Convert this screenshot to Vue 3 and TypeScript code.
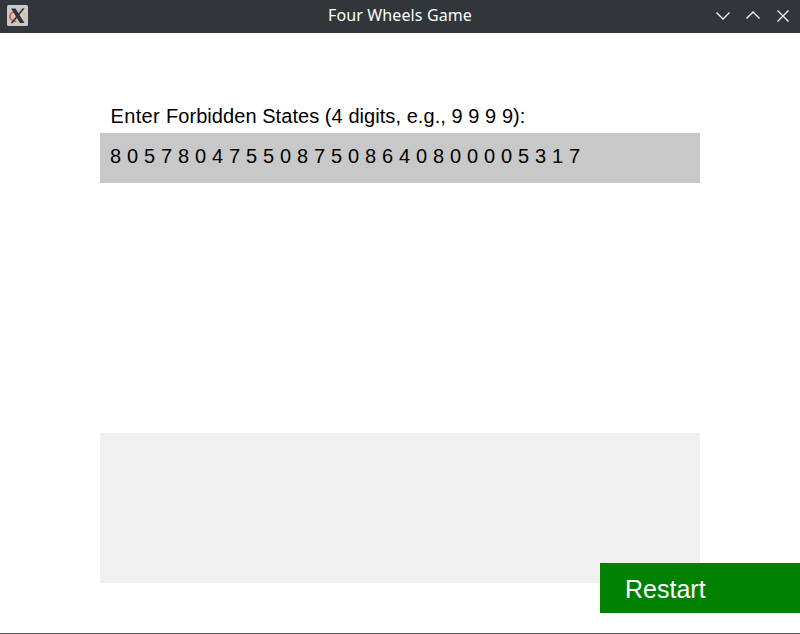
<script setup lang="ts">
import { ref } from 'vue'

const title = 'Four Wheels Game'
const initial = '8 0 5 7 8 0 4 7 5 5 0 8 7 5 0 8 6 4 0 8 0 0 0 0 5 3 1 7'
const states = ref<string>(initial)

function restart(): void {
  states.value = ''
}
</script>

<template>
  <div class="window">
    <header class="titlebar">
      <svg class="app-icon" width="21" height="21" viewBox="0 0 21 21">
        <rect width="21" height="21" rx="1.5" fill="#c6cacd" />
        <ellipse cx="10.7" cy="11.5" rx="8" ry="5" fill="none" stroke="#f3b56c" stroke-width="1.3" />
        <path d="M10 6.5C.6 6.5.6 16 9 16.5" fill="none" stroke="#ee5a24" stroke-width="1.7" />
        <path d="M4 3.5h4.5L17.5 18H13z" fill="#303438" />
        <path d="M15.5 3.5h1.7L5.7 18H4z" fill="#303438" stroke="#303438" stroke-width="0.4" />
      </svg>
      <h1 class="title">{{ title }}</h1>
      <div class="controls">
        <svg width="16" height="16" viewBox="0 0 16 16"><path d="M1.5 4.5L8 11l6.5-6.5" /></svg>
        <svg width="16" height="16" viewBox="0 0 16 16"><path d="M1.5 10.5L8 4l6.5 6.5" /></svg>
        <svg width="16" height="16" viewBox="0 0 16 16"><path d="M2.5 2.5l11 11M13.5 2.5l-11 11" /></svg>
      </div>
    </header>
    <main class="content">
      <p class="prompt"><span class="lead">Enter </span>Forbidden States (4 digits, e.g., 9 9 9 9):</p>
      <div class="entry">{{ states }}</div>
      <div class="output"></div>
      <button class="restart" type="button" @click="restart">Restart</button>
    </main>
  </div>
</template>

<style>
body {
  margin: 0;
  background: #fff;
}
</style>

<style scoped>
.window {
  display: flex;
  flex-direction: column;
  box-sizing: border-box;
  width: 800px;
  height: 634px;
  overflow: hidden;
  background: #fff;
  border-bottom: 1px solid #5b5e61;
  font-family: "Liberation Sans", Arial, sans-serif;
}

.titlebar {
  display: grid;
  grid-template-columns: 100px 1fr 100px;
  align-items: center;
  flex: none;
  height: 33px;
  background: #31363b;
}

.app-icon {
  margin: -2px 0 0 7px;
}

.title {
  margin: -3px 0 0;
  color: #fcfcfc;
  font: 400 16px/22px "Noto Sans", sans-serif;
  letter-spacing: 0.12px;
  text-align: center;
}

.controls {
  display: flex;
  justify-content: flex-end;
  gap: 14px;
  margin-top: -2px;
  padding-right: 9px;
}

.controls path {
  fill: none;
  stroke: #fcfcfc;
  stroke-width: 1.3;
}

.content {
  display: flex;
  flex-direction: column;
  padding-left: 100px;
}

.prompt {
  box-sizing: border-box;
  height: 100px;
  margin: 0;
  padding: 71px 0 0 10.5px;
  color: #000;
  font-size: 20px;
  line-height: 24px;
  white-space: nowrap;
  letter-spacing: 0.06px;
}

.lead {
  letter-spacing: 0.35px;
}

.entry {
  box-sizing: border-box;
  width: 600px;
  height: 50px;
  padding: 11px 10px;
  background: #c8c8c8;
  color: #000;
  font-size: 20px;
  line-height: 24px;
  white-space: nowrap;
  word-spacing: 0.32px;
}

.output {
  width: 600px;
  height: 150px;
  margin-top: 250px;
  background: #f0f0f0;
}

.restart {
  align-self: flex-end;
  width: 200px;
  height: 50px;
  margin-top: -20px;
  padding: 1px 0 0 25px;
  border: 0;
  background: #008000;
  color: #fff;
  font: 25px/28px "Liberation Sans", Arial, sans-serif;
  text-align: left;
}
</style>
